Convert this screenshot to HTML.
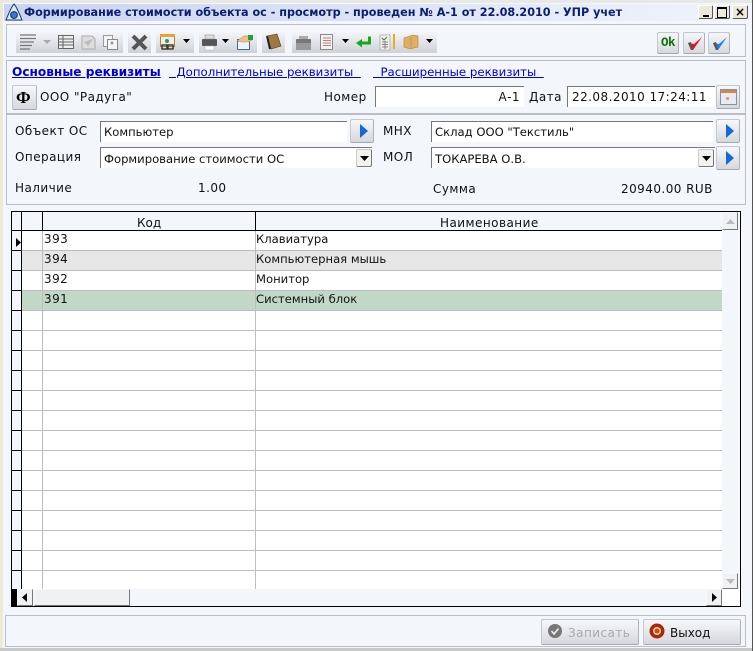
<!DOCTYPE html>
<html><head><meta charset="utf-8"><style>
html,body{margin:0;padding:0}
body{width:755px;height:651px;position:relative;overflow:hidden;background:#f3f6fb;font:11.6px/14px "DejaVu Sans","Liberation Sans",sans-serif;color:#111}
div,a,span.t,svg{position:absolute}
.t{white-space:nowrap}
.l{font-size:12px;letter-spacing:.45px}
.p{border:1px solid #b9bdc5;box-sizing:border-box}
.g{background:linear-gradient(#f5f7fb,#ced1d6)}
.i{background:#fff;border-left:1px solid #777;border-top:1px solid #777;box-sizing:border-box}
.b{box-sizing:border-box;background:linear-gradient(#f6f7fa,#d6d8dc);border:1px solid #c4c7cc;border-right-color:#aeb1b6;border-bottom-color:#a5a8ad;border-radius:2px}
a{color:#0000d8;text-decoration:underline;white-space:nowrap}
.sb{box-sizing:border-box;background:#f0f1f3;border:1px solid #f8f8f8;border-right-color:#777;border-bottom-color:#777}
</style></head><body>
<div style="left:0;top:0;width:3px;height:651px;background:#ece9d8"></div>
<div style="left:3px;top:0;width:749px;height:3px;background:#e8e8e4"></div>
<div style="left:752px;top:0;width:1px;height:651px;background:#555"></div>
<div style="left:753px;top:0;width:2px;height:651px;background:#fff"></div>
<div style="left:0;top:648px;width:752px;height:3px;background:#c8c8c8"></div>

<div style="left:4px;top:4px;width:747px;height:17px;background:linear-gradient(90deg,#c9d4ef,#f0f4fb)"></div>
<svg style="left:5px;top:3px" width="18" height="19" viewBox="0 0 18 19"><path d="M9 1C7 3 3 12 1 17h16C15 12 11 3 9 1z" fill="#dbe6f7" stroke="#1c3a78"/><circle cx="9" cy="12" r="3.400" fill="#3a78c8" stroke="#10306a"/></svg>
<span class="t" style="left:24px;top:6px;font-weight:bold;font-size:11.2px;color:#0a1f74">Формирование стоимости объекта ос - просмотр - проведен № А-1 от 22.08.2010 - УПР учет</span>
<div class="b" style="left:698px;top:5px;width:15px;height:14px;background:#ece9d8;border-color:#fff #555 #555 #fff"><div style="left:4px;top:9px;width:6px;height:2px;background:#000"></div></div>
<div class="b" style="left:714px;top:5px;width:16px;height:14px;background:#ece9d8;border-color:#fff #555 #555 #fff"><div style="left:2px;top:1px;width:8px;height:8px;border:1px solid #000;border-top-width:2px"></div></div>
<div class="b" style="left:732px;top:5px;width:16px;height:14px;background:#ece9d8;border-color:#fff #555 #555 #fff"><span class="t" style="left:2px;top:-1px;font-size:12px;color:#000;font-weight:bold">×</span></div>

<div class="p" style="left:6px;top:24px;width:740px;height:33px"></div>
<div class="g" style="left:16px;top:31px;width:107px;height:22px"></div>
<div class="g" style="left:128px;top:31px;width:23px;height:22px"></div>
<div class="g" style="left:156px;top:31px;width:38px;height:22px"></div>
<div class="g" style="left:199px;top:31px;width:58px;height:22px"></div>
<div class="g" style="left:262px;top:31px;width:23px;height:22px"></div>
<div class="g" style="left:292px;top:31px;width:145px;height:22px"></div>
<svg style="left:0;top:0" width="755" height="60" viewBox="0 0 755 60">
<path d="M20 35h16M20 38.500h16M20 42h14M20 45.500h12M20 49h10" stroke="#777" stroke-width="1.200"/>
<path d="M43 40h8l-4 4z" fill="#aaa"/>
<rect x="58.500" y="35.500" width="15" height="13" fill="#eee" stroke="#666"/><path d="M59 39h14M59 42h14M59 45h14M63 36v12" stroke="#666"/>
<path d="M82 36h10l3 3v10h-13z" fill="#ddd" stroke="#aaa"/><path d="M84 42l9-3-5 7z" fill="#bbb"/>
<rect x="103.500" y="35.500" width="9" height="11" fill="#f4f4f4" stroke="#999"/><rect x="107.500" y="39.500" width="10" height="10" fill="#f4f4f4" stroke="#888"/><circle cx="112" cy="43" r="1.500" fill="#999"/>
<path d="M133 36l13 13M146 36l-13 13" stroke="#555" stroke-width="4"/>
<rect x="160.500" y="34.500" width="14" height="12" fill="#e8eefa" stroke="#c87a20"/><rect x="160" y="34" width="15" height="3" fill="#f0a030"/><circle cx="167" cy="41" r="2" fill="#3a9a3a"/><rect x="162" y="45" width="5" height="4" fill="none" stroke="#333" stroke-width="1.400"/><rect x="168" y="45" width="5" height="4" fill="none" stroke="#333" stroke-width="1.400"/>
<path d="M183 39h7l-3.500 4z" fill="#000"/>
<rect x="202" y="39" width="15" height="7" rx="1" fill="#555"/><rect x="205" y="35" width="9" height="4" fill="#ddd" stroke="#888" stroke-width=".5"/><rect x="205" y="46" width="9" height="4" fill="#fff" stroke="#aaa" stroke-width=".5"/>
<path d="M222 39h7l-3.500 4z" fill="#000"/>
<rect x="237.500" y="39.500" width="12" height="10" fill="#eef3fa" stroke="#4a6a90"/><path d="M237 41l7-5h6l2 4-5 2h-5z" fill="#eec090" stroke="#b08040" stroke-width=".5"/><rect x="248" y="35" width="5" height="5" fill="#20a040"/>
<path d="M267 36l10-2 4 12-10 3z" fill="#a07840" stroke="#5a3c18" stroke-width=".6"/><path d="M267 36l3 13" stroke="#222" stroke-width="2"/>
<rect x="296" y="39" width="15" height="11" rx="1" fill="#777"/><rect x="296" y="43" width="15" height="7" fill="#999"/><rect x="299" y="36" width="9" height="3" fill="#aaa"/>
<rect x="320.500" y="34.500" width="12" height="15" fill="#f5f0f2" stroke="#888"/><path d="M323 38h8M323 40.500h8M323 43h8M323 45.500h8" stroke="#c08080"/>
<path d="M342 39h7l-3.500 4z" fill="#000"/>
<path d="M356 43l6-4v2.500h6v-5h3v8h-9v3z" fill="#18a818"/>
<path d="M380 35h10v15h-10z" fill="#f0f0ea" stroke="#aaa" stroke-width=".8"/><path d="M382 38l2 2 3-3" stroke="#2a8a2a" fill="none"/><path d="M382 42h6M382 44.500h6M382 47h6M385 41v8" stroke="#888"/><rect x="393" y="34" width="2" height="15" fill="#e0b020"/>
<path d="M404 38l9-3 5 1v11l-8 2-6-2z" fill="#e0b060" stroke="#b08038" stroke-width=".6"/><path d="M411 37v12" stroke="#c89848"/>
<path d="M426 39h7l-3.500 4z" fill="#000"/>
</svg>
<div class="b" style="left:657px;top:32px;width:22px;height:22px"><span class="t" style="left:3px;top:3px;font:bold 12.500px/14px 'Liberation Mono',monospace;letter-spacing:-.5px;color:#0a700a">Ok</span></div>
<div class="b" style="left:683px;top:32px;width:22px;height:22px"><svg style="left:2px;top:2px" width="18" height="16" viewBox="0 0 18 16"><path d="M2 8l3 7h2L16 2 8 9z" fill="#e81020"/><path d="M2 8l3 7h2L5 7z" fill="#555"/></svg></div>
<div class="b" style="left:708px;top:32px;width:22px;height:22px"><svg style="left:2px;top:2px" width="18" height="16" viewBox="0 0 18 16"><path d="M2 8l3 7h2L16 2 8 9z" fill="#2080f0"/><path d="M2 8l3 7h2L5 7z" fill="#555"/></svg></div>

<div class="p" style="left:6px;top:60px;width:740px;height:54px"></div>
<a style="left:12px;top:65px;font-weight:bold;font-size:12.150px">Основные реквизиты</a>
<a style="left:169px;top:65px;font-size:11.750px">&nbsp;&nbsp;Дополнительные реквизиты&nbsp;&nbsp;</a>
<a style="left:373px;top:65px;font-size:11.750px">&nbsp;&nbsp;Расширенные реквизиты&nbsp;&nbsp;</a>
<div class="b" style="left:12px;top:85px;width:25px;height:25px"><span class="t" style="left:3px;top:3px;font:bold 17px/17px 'Liberation Serif',serif;color:#000">Ф</span></div>
<span class="t l" style="left:40px;top:90px">ООО "Радуга"</span>
<span class="t l" style="left:324px;top:90px">Номер</span>
<div class="i" style="left:375px;top:86px;width:149px;height:21px"><span class="t l" style="right:4px;top:3px">А-1</span></div>
<span class="t l" style="left:529px;top:90px">Дата</span>
<div class="i" style="left:567px;top:86px;width:148px;height:21px"><span class="t l" style="left:4px;top:3px">22.08.2010 17:24:11</span></div>
<div class="b" style="left:716px;top:85px;width:24px;height:24px"><svg style="left:3px;top:3px" width="17" height="17" viewBox="0 0 17 17"><rect x=".5" y=".5" width="16" height="15" fill="#e6ecf6" stroke="#8a8f98"/><rect x="1" y="1" width="15" height="3" fill="#d08850"/><rect x="6" y="8" width="3" height="3" fill="#e0a090"/></svg></div>

<div class="p" style="left:6px;top:114px;width:740px;height:91px"></div>
<span class="t l" style="left:15px;top:124px">Объект ОС</span>
<div class="i" style="left:100px;top:121px;width:247px;height:21px"><span class="t" style="left:3px;top:3px">Компьютер</span></div>
<div class="b" style="left:350px;top:119px;width:24px;height:24px"><svg style="left:8px;top:4px" width="10" height="14"><path d="M1 0l8 7-8 7z" fill="#1468d8"/></svg></div>
<span class="t l" style="left:15px;top:150px">Операция</span>
<div class="i" style="left:100px;top:147px;width:272px;height:21px"><span class="t" style="left:3px;top:4px">Формирование стоимости ОС</span>
<div class="b" style="right:0;top:1px;width:16px;height:18px;background:#f2f2ee;border-color:#ccc #777 #777 #ccc"><svg style="left:3px;top:6px" width="9" height="5"><path d="M0 0h9l-4.500 5z" fill="#000"/></svg></div></div>
<span class="t l" style="left:383px;top:124px">МНХ</span>
<div class="i" style="left:431px;top:121px;width:282px;height:21px"><span class="t" style="left:3px;top:3px">Склад ООО "Текстиль"</span></div>
<div class="b" style="left:716px;top:119px;width:24px;height:24px"><svg style="left:8px;top:4px" width="10" height="14"><path d="M1 0l8 7-8 7z" fill="#1468d8"/></svg></div>
<span class="t l" style="left:383px;top:150px">МОЛ</span>
<div class="i" style="left:431px;top:147px;width:284px;height:21px"><span class="t" style="left:3px;top:4px">ТОКАРЕВА О.В.</span>
<div class="b" style="right:1px;top:1px;width:16px;height:18px;background:#f2f2ee;border-color:#ccc #777 #777 #ccc"><svg style="left:3px;top:6px" width="9" height="5"><path d="M0 0h9l-4.500 5z" fill="#000"/></svg></div></div>
<div class="b" style="left:716px;top:146px;width:24px;height:24px"><svg style="left:8px;top:4px" width="10" height="14"><path d="M1 0l8 7-8 7z" fill="#1468d8"/></svg></div>
<span class="t l" style="left:15px;top:181px">Наличие</span>
<span class="t l" style="left:198px;top:181px">1.00</span>
<span class="t l" style="left:433px;top:182px">Сумма</span>
<span class="t l" style="left:621px;top:182px">20940.00 RUB</span>

<div style="left:11px;top:211px;width:730px;height:396px;box-sizing:border-box;border:1px solid #000;background:#fff"></div>
<div style="left:12px;top:212px;width:9px;height:377px;background:#f3f6fb"></div>
<div style="left:21px;top:212px;width:1px;height:377px;background:#000"></div>
<div style="left:22px;top:212px;width:700px;height:18px;background:#f3f6fb"></div>
<div style="left:12px;top:230px;width:710px;height:1px;background:#000"></div>
<div style="left:42px;top:212px;width:1px;height:18px;background:#000"></div>
<div style="left:255px;top:212px;width:1px;height:18px;background:#000"></div>
<div style="left:722px;top:212px;width:18px;height:394px;background:#f3f6fb"></div>
<div style="left:22px;top:251px;width:700px;height:19px;background:#e6e6e6"></div>
<div style="left:22px;top:291px;width:700px;height:19px;background:#c2d8c6"></div>
<div style="left:22px;top:231px;width:700px;height:358px;background:repeating-linear-gradient(transparent 0,transparent 19px,#bdbdbd 19px,#bdbdbd 20px)"></div>
<div style="left:12px;top:231px;width:9px;height:358px;background:repeating-linear-gradient(transparent 0,transparent 19px,#000 19px,#000 20px)"></div>
<div style="left:42px;top:231px;width:1px;height:358px;background:#bdbdbd"></div>
<div style="left:255px;top:231px;width:1px;height:358px;background:#bdbdbd"></div>
<svg style="left:16px;top:238px" width="6" height="9"><path d="M0 0l5 4.500-5 4.500z" fill="#000"/></svg>
<span class="t" style="left:137px;top:216px;font-size:12px">Код</span>
<span class="t l" style="left:440px;top:216px">Наименование</span>
<span class="t l" style="left:44px;top:232px">393</span><span class="t" style="left:256px;top:232px">Клавиатура</span>
<span class="t l" style="left:44px;top:252px">394</span><span class="t" style="left:256px;top:252px">Компьютерная мышь</span>
<span class="t l" style="left:44px;top:272px">392</span><span class="t" style="left:256px;top:272px">Монитор</span>
<span class="t l" style="left:44px;top:292px">391</span><span class="t" style="left:256px;top:292px">Системный блок</span>
<div class="sb" style="left:722px;top:212px;width:16px;height:18px"><svg style="left:3px;top:6px" width="9" height="5"><path d="M4.500 0l4.500 5h-9z" fill="#bbb"/></svg></div>
<div class="sb" style="left:722px;top:573px;width:16px;height:16px"><svg style="left:3px;top:5px" width="9" height="5"><path d="M0 0h9l-4.500 5z" fill="#bbb"/></svg></div>
<div style="left:722px;top:589px;width:18px;height:17px;background:#fff"></div>
<div style="left:12px;top:589px;width:5px;height:17px;background:#000"></div>
<div style="left:17px;top:589px;width:705px;height:17px;background:#f3f6fb"></div>
<div class="sb" style="left:17px;top:589px;width:16px;height:17px"><svg style="left:4px;top:3px" width="6" height="9"><path d="M5 0v9l-5-4.500z" fill="#000"/></svg></div>
<div class="sb" style="left:34px;top:589px;width:96px;height:17px"></div>
<div class="sb" style="left:706px;top:589px;width:16px;height:17px"><svg style="left:5px;top:3px" width="6" height="9"><path d="M0 0v9l5-4.500z" fill="#000"/></svg></div>

<div class="p" style="left:5px;top:615px;width:741px;height:32px"></div>
<div class="b" style="left:541px;top:619px;width:98px;height:26px"><svg style="left:5px;top:3px" width="16" height="16"><circle cx="8" cy="8" r="7" fill="#777"/><path d="M4.500 8l2.500 3 4.500-5.500" stroke="#eee" stroke-width="1.600" fill="none"/></svg><span class="t l" style="left:26px;top:6px;color:#aaa">Записать</span></div>
<div class="b" style="left:643px;top:619px;width:98px;height:26px"><svg style="left:5px;top:3px" width="16" height="16"><circle cx="8" cy="8" r="7.500" fill="#a82808"/><circle cx="8" cy="8" r="4" fill="#f8d0b0"/><circle cx="8" cy="8" r="2.500" fill="#d84810"/></svg><span class="t" style="left:26px;top:6px;font-size:12px;color:#111">Выход</span></div>
</body></html>
